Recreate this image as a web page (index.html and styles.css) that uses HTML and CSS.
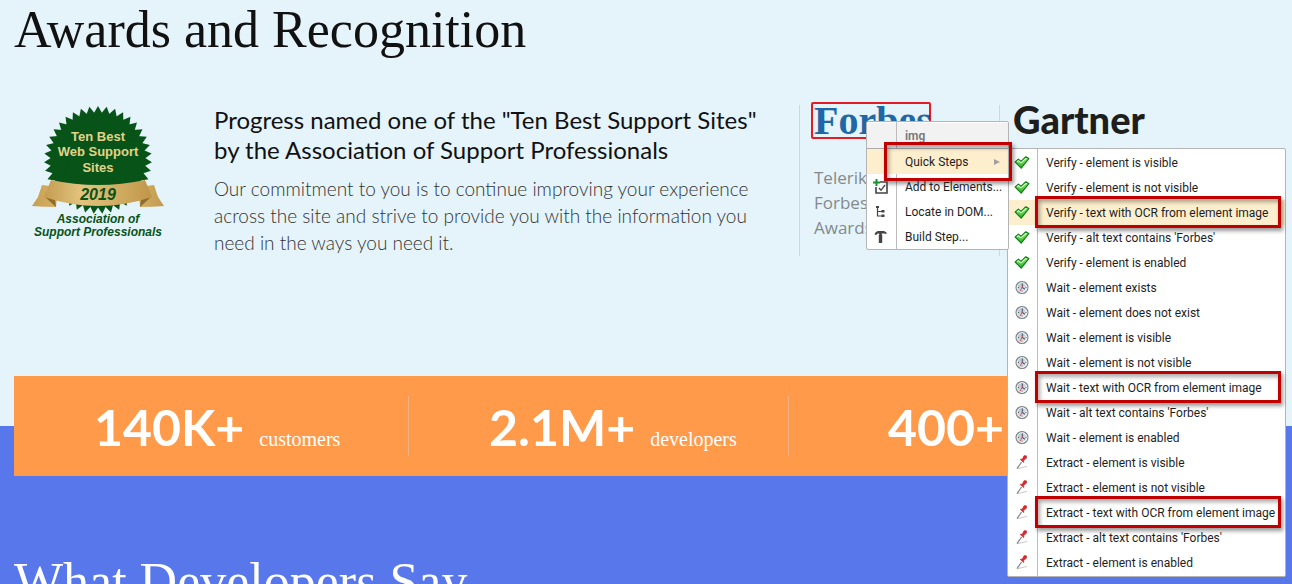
FILE: index.html
```html
<!DOCTYPE html>
<html lang="en">
<head>
<meta charset="utf-8">
<title>Awards and Recognition</title>
<link rel="stylesheet" href="styles.css">
</head>
<body>
<svg class="sprite" aria-hidden="true">
  <defs>
    <linearGradient id="green" x1="0" y1="0" x2="0" y2="1"><stop offset="0" stop-color="#a6f08a"/><stop offset="1" stop-color="#1fae1b"/></linearGradient>
    <linearGradient id="gold" x1="0" y1="0" x2="1" y2="0"><stop offset="0" stop-color="#c39c50"/><stop offset=".35" stop-color="#e3c47e"/><stop offset="1" stop-color="#bf9648"/></linearGradient>
    <linearGradient id="tail" x1="0" y1="0" x2="1" y2="0"><stop offset="0" stop-color="#c79e50"/><stop offset=".5" stop-color="#ecd190"/><stop offset="1" stop-color="#c29a4d"/></linearGradient>
    <linearGradient id="face" x1="0" y1="0" x2="1" y2="1"><stop offset="0" stop-color="#a9b7c0"/><stop offset="1" stop-color="#eef5f9"/></linearGradient>
  </defs>
  <symbol id="check" viewBox="0 0 16 16"><path d="M1.2 7 4.4 4.2 7 6.4 11.8 1.8 14.8 3.6 7.2 13.2Z" fill="url(#green)" stroke="#0f7f17" stroke-width="1.2" stroke-linejoin="round"/><path d="M3 6.8 4.5 5.6 7 7.8 12.2 3.2" fill="none" stroke="#d4fbc4" stroke-width="1.1"/></symbol>
  <symbol id="clock" viewBox="0 0 16 16"><circle cx="8" cy="7.5" r="6" fill="url(#face)" stroke="#7c8286" stroke-width="1.1"/><circle cx="8" cy="7.5" r="4.8" fill="none" stroke="#f4f8fa" stroke-width=".8"/><path d="M8.3 3.5V7.5l2.6 1.8" fill="none" stroke="#3a5b75" stroke-width="1.1"/><path d="M9 5.5 6 11.3" stroke="#e04b4f" stroke-width=".9"/><path d="M4 7.5h1M11.5 7.5h1M8 11.5v-1" stroke="#333" stroke-width=".7"/></symbol>
  <symbol id="pin" viewBox="0 0 16 16"><path d="M4 13.6 13 11.4" stroke="#c9c9c9" stroke-width="1"/><path d="M3 13.6 7.6 7" stroke="#888" stroke-width="1.3"/><path d="M6.2 4.4 9.8 7.6 9.6 5.6 12.6 3 12.4 .8 10 .7 8.4 4Z" fill="#dc2a2d" stroke="#c01c21" stroke-width=".6"/></symbol>
</svg>

<main class="page">
  <section class="awards">
    <h1 class="title">Awards and Recognition</h1>
    <div class="award-row">
      <article class="support">
        <svg class="badge" viewBox="0 0 136 136" role="img" aria-label="Ten Best Web Support Sites 2019">
          <defs><polygon id="tri" points="0,-54 46.77,27 -46.77,27"/></defs>
          <g transform="translate(68 55)" fill="#075318">
            <use href="#tri"/><use href="#tri" transform="rotate(9.23)"/><use href="#tri" transform="rotate(18.46)"/><use href="#tri" transform="rotate(27.69)"/><use href="#tri" transform="rotate(36.92)"/><use href="#tri" transform="rotate(46.15)"/><use href="#tri" transform="rotate(55.38)"/><use href="#tri" transform="rotate(64.62)"/><use href="#tri" transform="rotate(73.85)"/><use href="#tri" transform="rotate(83.08)"/><use href="#tri" transform="rotate(92.31)"/><use href="#tri" transform="rotate(101.54)"/><use href="#tri" transform="rotate(110.77)"/>
          </g>
          <path d="M12 80 28 82 26 102Q14 102 2 101L8 92Z M124 80 108 82 110 102Q122 102 134 101L128 92Z" fill="url(#tail)"/>
          <path d="M15 92 26 102 25 94Z M121 92 110 102 111 94Z" fill="#8f6c2c"/>
          <path d="M21 75Q68 85 115 75L122 92Q68 110 14 92Z" fill="url(#gold)"/>
          <g font-family="Liberation Sans, Arial, sans-serif" font-weight="700" text-anchor="middle">
            <g fill="#e3d38a" font-size="13"><text x="68" y="36">Ten Best</text><text x="68" y="51">Web Support</text><text x="68" y="67">Sites</text></g>
            <g fill="#075318" font-style="italic"><text x="68" y="95" font-size="16">2019</text><text x="68" y="118" font-size="12">Association of</text><text x="68" y="131" font-size="12">Support Professionals</text></g>
          </g>
        </svg>
        <div class="support-copy">
          <h2 class="support-title">Progress named one of the "Ten Best Support Sites" by the Association of Support Professionals</h2>
          <p class="support-text">Our commitment to you is to continue improving your experience across the site and strive to provide you with the information you need in the ways you need it.</p>
        </div>
      </article>
      <article class="brand">
        <div class="forbes">Forbes</div>
        <p class="brand-text">Telerik<br>Forbes<br>Awards</p>
        <div class="menu context">
          <div class="menu-head">img</div>
          <button class="item active framed"><span class="icon"></span><span class="label">Quick Steps</span><svg class="arrow" viewBox="0 0 6 8"><path d="M0 1 6 4 0 7Z"/></svg></button>
          <button class="item"><span class="icon"><svg viewBox="0 0 16 16"><path d="M7 3H14V14H3V8" fill="none" stroke="#444" stroke-width="1.6"/><path d="M6 9 8 11.3 12 6" fill="none" stroke="#444" stroke-width="1.3"/><path d="M3.5 0V7M0 3.5H7" stroke="#169430" stroke-width="2"/></svg></span><span class="label">Add to Elements...</span></button>
          <button class="item"><span class="icon"><svg viewBox="0 0 16 16"><path d="M4.5 3V12H9M4.5 7.5H9" fill="none" stroke="#444" stroke-width="1.2"/><path d="M3 2H6V4H3ZM8.5 6H11.5V8.5H8.5ZM8.5 10.5H11.5V13H8.5Z" fill="#444"/></svg></span><span class="label">Locate in DOM...</span></button>
          <button class="item"><span class="icon"><svg viewBox="0 0 16 16"><path d="M1.5 5.5Q2.5 2 5.5 2H11L13.5 3.6V5L11 4.6H8.8V6H9.2V14H5.8V6H6.2V4.6Q4 4.6 3.2 6Z" fill="#444"/></svg></span><span class="label">Build Step...</span></button>
        </div>
        <div class="menu quick">
          <button class="item"><svg class="icon"><use href="#check"/></svg><span class="label">Verify - element is visible</span></button>
          <button class="item"><svg class="icon"><use href="#check"/></svg><span class="label">Verify - element is not visible</span></button>
          <button class="item active framed"><svg class="icon"><use href="#check"/></svg><span class="label">Verify - text with OCR from element image</span></button>
          <button class="item"><svg class="icon"><use href="#check"/></svg><span class="label">Verify - alt text contains 'Forbes'</span></button>
          <button class="item"><svg class="icon"><use href="#check"/></svg><span class="label">Verify - element is enabled</span></button>
          <button class="item"><svg class="icon"><use href="#clock"/></svg><span class="label">Wait - element exists</span></button>
          <button class="item"><svg class="icon"><use href="#clock"/></svg><span class="label">Wait - element does not exist</span></button>
          <button class="item"><svg class="icon"><use href="#clock"/></svg><span class="label">Wait - element is visible</span></button>
          <button class="item"><svg class="icon"><use href="#clock"/></svg><span class="label">Wait - element is not visible</span></button>
          <button class="item framed"><svg class="icon"><use href="#clock"/></svg><span class="label">Wait - text with OCR from element image</span></button>
          <button class="item"><svg class="icon"><use href="#clock"/></svg><span class="label">Wait - alt text contains 'Forbes'</span></button>
          <button class="item"><svg class="icon"><use href="#clock"/></svg><span class="label">Wait - element is enabled</span></button>
          <button class="item"><svg class="icon"><use href="#pin"/></svg><span class="label">Extract - element is visible</span></button>
          <button class="item"><svg class="icon"><use href="#pin"/></svg><span class="label">Extract - element is not visible</span></button>
          <button class="item framed"><svg class="icon"><use href="#pin"/></svg><span class="label">Extract - text with OCR from element image</span></button>
          <button class="item"><svg class="icon"><use href="#pin"/></svg><span class="label">Extract - alt text contains 'Forbes'</span></button>
          <button class="item"><svg class="icon"><use href="#pin"/></svg><span class="label">Extract - element is enabled</span></button>
        </div>
      </article>
      <article class="brand">
        <div class="gartner">Gartner</div>
      </article>
    </div>
  </section>
  <section class="developers">
    <div class="stats">
      <div class="stat"><strong class="number">140K+</strong><span class="unit">customers</span></div>
      <div class="stat"><strong class="number">2.1M+</strong><span class="unit">developers</span></div>
      <div class="stat"><strong class="number">400+</strong></div>
    </div>
    <h2 class="title">What Developers Say</h2>
  </section>
</main>
</body>
</html>
```
FILE: styles.css
```css
*, *::after { box-sizing: border-box; }
body { margin: 0; background: #5777ea; font-family: Lato, sans-serif; color: #111; }
.sprite { position: absolute; width: 0; height: 0; }
.page { height: 100vh; overflow: hidden; }
.title { margin: 0; font: 400 52px/60px "Liberation Serif", serif; }
.awards { padding: 0 14px 170px; background: #e4f4fa; }
.award-row { display: grid; grid-template-columns: minmax(0, 785fr) minmax(0, 200fr) minmax(0, 279fr); padding-top: 45px; }
.support { display: flex; gap: 48px; padding: 0 16px; }
.badge { flex: none; width: 136px; height: 136px; }
.support-copy { flex: 1; }
.support-title { margin: 0 0 10px; font-size: 24px; line-height: 30px; font-weight: 400; }
.support-text { margin: 0; font-size: 19px; line-height: 27px; font-weight: 300; color: #333; }
.brand { position: relative; height: 151px; border-left: 1px solid #cbd8dd; }
.forbes { width: 120px; height: 37px; margin: -3px 0 0 11px; padding-left: 1px; border: 2px solid #e51c23; border-radius: 2px; font: 700 40px/34px "Liberation Serif", serif; color: #2167a5; }
.brand-text { margin: 26px 0 0 14px; font: 17px/25px "Open Sans", sans-serif; color: #85898c; }
.gartner { margin-left: 13px; font-size: 38px; line-height: 28px; font-weight: 900; color: #1e1e1c; }
.menu { position: absolute; border: 1px solid #b4b4b4; border-radius: 2px; background: linear-gradient(90deg, transparent 29px, #bcbcbc 29px, #bcbcbc 30px, transparent 30px) #fff; font: 12px/25px Roboto, sans-serif; color: #1e1e1e; }
.context { left: 66px; top: 16px; z-index: 2; width: 143px; padding-top: 1px; }
.quick { left: 207px; top: 43px; z-index: 1; width: 279px; padding: 1px 0; }
.menu-head { height: 26px; padding: 1px 0 0 38px; border-bottom: 1px solid #aaa; background: linear-gradient(90deg, transparent 29px, #bcbcbc 29px, #bcbcbc 30px, transparent 30px) #f2f2f2; font-weight: 600; color: #777; }
.item { position: relative; display: flex; align-items: center; width: 100%; height: 25px; padding: 0; border: 0; background: none; font: inherit; color: inherit; text-align: left; white-space: nowrap; }
.active { background: #fdefcd; }
.icon { flex: none; width: 16px; height: 16px; margin: 0 15px 0 6px; }
.icon svg { display: block; width: 16px; height: 16px; }
.label { margin-left: 1px; padding-top: 2px; }
.arrow { width: 6px; height: 8px; margin-left: auto; margin-right: 8px; fill: #a0a0a0; }
.framed::after { content: ""; position: absolute; top: -4px; left: 27px; right: 4px; height: 32px; border: 3px solid #c00000; box-shadow: 2px 3px 4px #0006, inset 2px 3px 4px #0005; }
.context .framed::after { top: -7px; left: 17px; right: -4px; height: 39px; }
.developers { padding: 0 14px; color: #fff; }
.stats { display: grid; grid-template-columns: 395fr 380fr 489fr; margin-top: -50px; margin-bottom: 76px; padding: 20px 0; background: #ff9a4b; }
.stat { display: flex; align-items: baseline; gap: 15px; height: 60px; padding-left: 80px; border-right: 1px solid #eeb184; line-height: 63px; }
.stat:last-child { padding-left: 99px; border: 0; }
.number { font-size: 50px; font-weight: 700; }
.unit { font-family: "Liberation Serif", serif; font-size: 20px; }
```
